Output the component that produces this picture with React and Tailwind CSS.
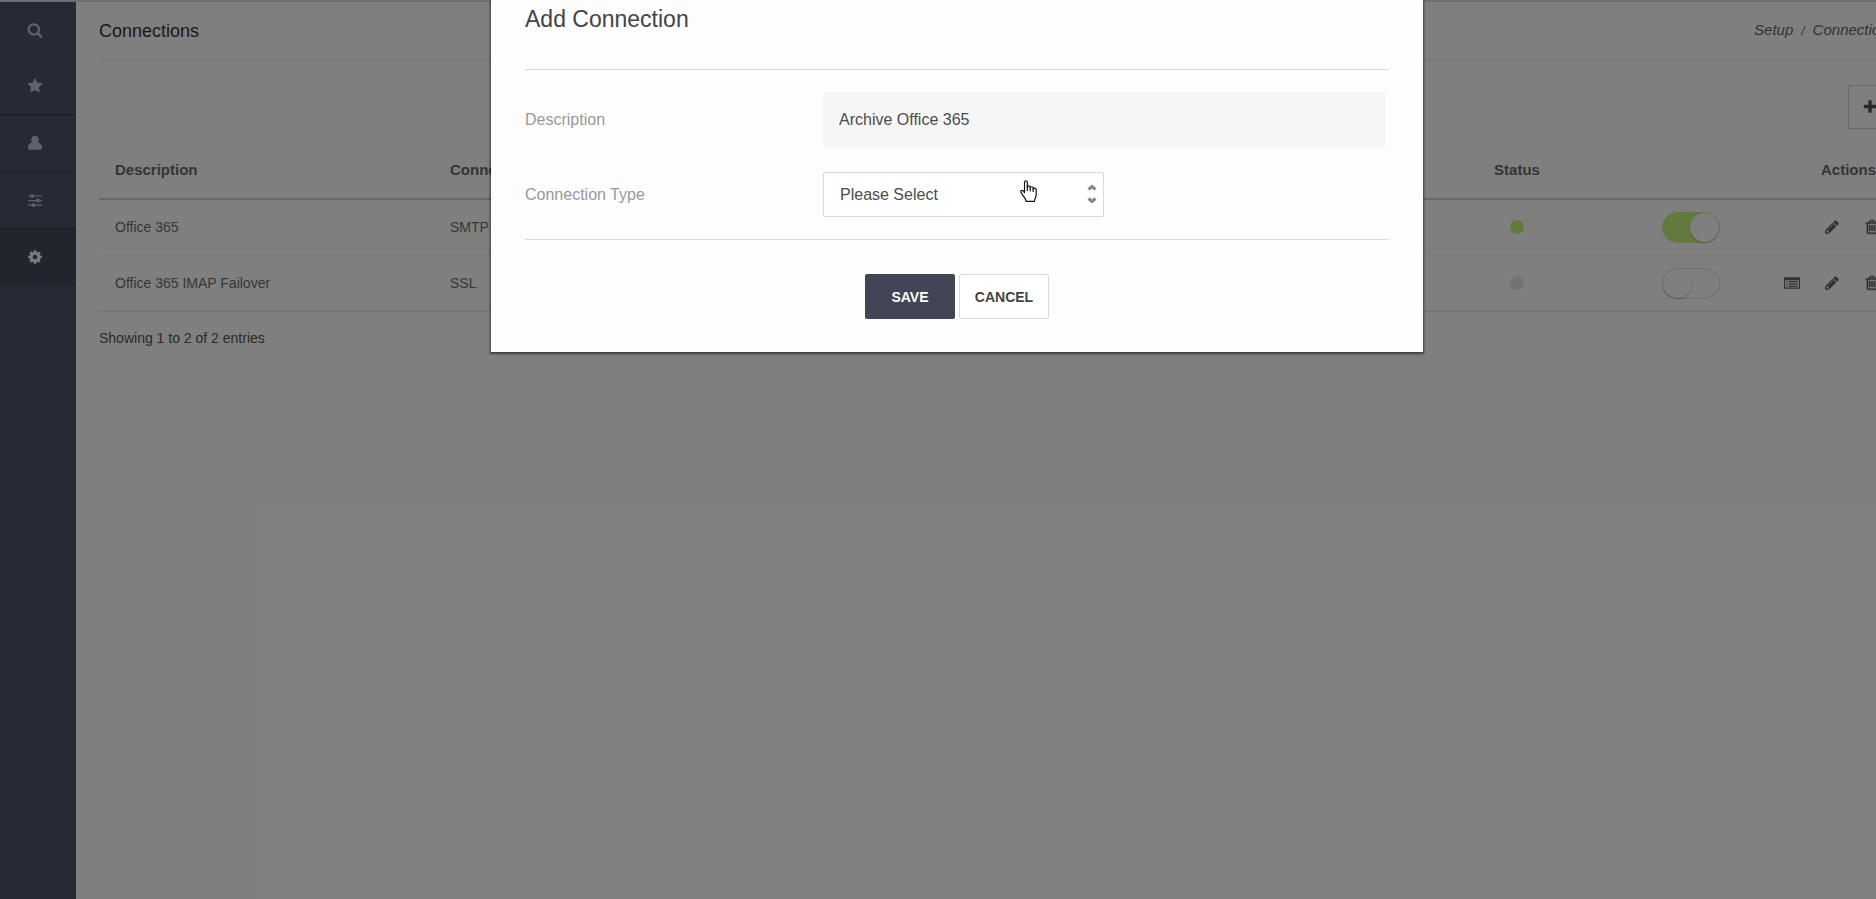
import { useState } from 'react';

const ICONS = {
  search:
    'M1216 832q0-185-131.5-316.5t-316.5-131.5-316.5 131.5-131.5 316.5 131.5 316.5 316.5 131.5 316.5-131.5 131.5-316.5zm512 832q0 52-38 90t-90 38q-54 0-90-38l-343-342q-179 124-399 124-143 0-273.5-55.5t-225-150-150-225-55.5-273.5 55.5-273.5 150-225 225-150 273.5-55.5 273.5 55.5 225 150 150 225 55.5 273.5q0 220-124 399l343 343q37 37 37 90z',
  star:
    'M1728 647q0 22-26 48l-363 354 86 500q1 7 1 20 0 21-10.5 35.5t-30.5 14.5q-19 0-40-12l-449-236-449 236q-22 12-40 12-21 0-31.5-14.5t-10.5-35.5q0-6 2-20l86-500-364-354q-25-27-25-48 0-37 56-46l502-73 225-455q19-41 49-41t49 41l225 455 502 73q56 9 56 46z',
  user:
    'M896 96A440 440 0 0 1 1220 830C1500 850 1680 1060 1680 1400C1680 1560 1580 1664 1420 1664H372C212 1664 112 1560 112 1400C112 1060 292 850 572 830A440 440 0 0 1 896 96Z',
  sliders:
    'M480 1408v128h-352v-128h352zm352-128q26 0 45 19t19 45v256q0 26-19 45t-45 19h-256q-26 0-45-19t-19-45v-256q0-26 19-45t45-19h256zm160-384v128h-864v-128h864zm-640-512v128h-224v-128h224zm1312 1024v128h-736v-128h736zm-960-1152q26 0 45 19t19 45v256q0 26-19 45t-45 19h-256q-26 0-45-19t-19-45v-256q0-26 19-45t45-19h256zm640 512q26 0 45 19t19 45v256q0 26-19 45t-45 19h-256q-26 0-45-19t-19-45v-256q0-26 19-45t45-19h256zm320 128v128h-224v-128h224zm0-512v128h-864v-128h864z',
  cog:
    'M1152 896q0-106-75-181t-181-75-181 75-75 181 75 181 181 75 181-75 75-181zm512-109v222q0 12-8 23t-20 13l-185 28q-19 54-39 91 35 50 107 138 10 12 10 25t-9 23q-27 37-99 108t-94 71q-12 0-26-9l-138-108q-44 23-91 38-16 136-29 186-7 28-36 28h-222q-14 0-24.5-8.5t-11.5-21.5l-28-184q-49-16-90-37l-141 107q-10 9-25 9-14 0-25-11-126-114-165-168-7-10-7-23 0-12 8-23 15-21 51-66.5t54-70.5q-27-50-41-99l-183-27q-13-2-21-12.5t-8-23.5v-222q0-12 8-23t19-13l186-28q14-46 39-92-40-57-107-138-10-12-10-24 0-10 9-23 26-36 98.5-107.5t94.5-71.5q13 0 26 10l138 107q44-23 91-38 16-136 29-186 7-28 36-28h222q14 0 24.5 8.5t11.5 21.5l28 184q49 16 90 37l142-107q9-9 24-9 13 0 25 10 129 119 165 170 7 8 7 22 0 12-8 23-15 21-51 66.5t-54 70.5q26 50 41 98l183 28q13 2 21 12.5t8 23.5z',
  pencil:
    'M491 1536l91-91-235-235-91 91v107h128v128h107zm523-928q0-22-22-22-10 0-17 7l-542 542q-7 7-7 17 0 22 22 22 10 0 17-7l542-542q7-7 7-17zm-54-192l416 416-832 832h-416v-416zm683 96q0 53-37 90l-166 166-416-416 166-165q36-38 90-38 53 0 91 38l235 234q37 39 37 91z',
  trash:
    'M704 736v576q0 14-9 23t-23 9h-64q-14 0-23-9t-9-23v-576q0-14 9-23t23-9h64q14 0 23 9t9 23zm256 0v576q0 14-9 23t-23 9h-64q-14 0-23-9t-9-23v-576q0-14 9-23t23-9h64q14 0 23 9t9 23zm256 0v576q0 14-9 23t-23 9h-64q-14 0-23-9t-9-23v-576q0-14 9-23t23-9h64q14 0 23 9t9 23zm128 724v-948h-896v948q0 22 7 40.5t14.5 27 10.5 8.5h832q3 0 10.5-8.5t14.5-27 7-40.5zm-672-1076h448l-48-117q-7-9-17-11h-317q-10 2-17 11zm928 32v64q0 14-9 23t-23 9h-96v948q0 83-47 143.5t-113 60.5h-832q-66 0-113-58.5t-47-141.5v-952h-96q-14 0-23-9t-9-23v-64q0-14 9-23t23-9h309l70-167q15-37 54-63t79-26h320q40 0 79 26t54 63l70 167h309q14 0 23 9t9 23z',
  list:
    'M0 352q0-96 96-96h1600q96 0 96 96v1088q0 96-96 96h-1600q-96 0-96-96zM128 576v832h1536v-832zM256 672h128v128h-128zM512 672h1024v128h-1024zM256 928h128v128h-128zM512 928h1024v128h-1024zM256 1184h128v128h-128zM512 1184h1024v128h-1024z',
  plus:
    'M1600 736v192q0 40-28 68t-68 28h-416v416q0 40-28 68t-68 28h-192q-40 0-68-28t-28-68v-416h-416q-40 0-68-28t-28-68v-192q0-40 28-68t68-28h416v-416q0-40 28-68t68-28h192q40 0 68 28t28 68v416h416q40 0 68 28t28 68z',
};

const NAV = [
  { icon: 'search', label: 'Search' },
  { icon: 'star', label: 'Favourites' },
  { icon: 'user', label: 'Users' },
  { icon: 'sliders', label: 'Policies' },
  { icon: 'cog', label: 'Setup', active: true },
];

const CONNECTIONS = [
  { id: 1, description: 'Office 365', type: 'SMTP', enabled: true },
  { id: 2, description: 'Office 365 IMAP Failover', type: 'SSL', enabled: false },
];

function Icon({ name, className }) {
  return (
    <svg viewBox="0 0 1792 1792" fill="currentColor" className={className} aria-hidden="true">
      <path d={ICONS[name]} fillRule={name === 'list' ? 'evenodd' : 'nonzero'} />
    </svg>
  );
}

function Sidebar() {
  return (
    <nav className="w-[76px] shrink-0 bg-[#4c5568]">
      {NAV.map((item, i) => (
        <a
          key={item.icon}
          href="#"
          aria-label={item.label}
          className={`flex items-center justify-center border-b pr-[6px] ${i === 0 ? 'h-14' : 'h-[57px]'} ${
            i === 0 || i === NAV.length - 1 ? 'border-transparent' : 'border-[#363b48]'
          } ${item.active ? 'bg-[#434a5b] text-[#f2f4f8]' : 'text-[#bfc4d2]'}`}
        >
          <Icon name={item.icon} className="size-4" />
        </a>
      ))}
    </nav>
  );
}

function ConnectionRow({ connection }) {
  const [enabled, setEnabled] = useState(connection.enabled);

  return (
    <tr className="h-14 border-b border-[#f2f2f2] last:border-[#e4e4e4]">
      <td className="px-4">{connection.description}</td>
      <td className="px-4">{connection.type}</td>
      <td>
        <span className={`mx-auto block size-[14px] rounded-full ${enabled ? 'bg-[#c4f57a]' : 'bg-[#e6e6e6]'}`} />
      </td>
      <td>
        <input
          type="checkbox"
          aria-label={`Enable ${connection.description}`}
          checked={enabled}
          onChange={(e) => setEnabled(e.target.checked)}
          className="mx-auto block h-[31px] w-[58px] appearance-none rounded-full border border-[#dedede] bg-white before:block before:size-[29px] before:rounded-full before:bg-white before:shadow-[0_1px_2px_rgba(0,0,0,0.25)] checked:border-[#c4f57a] checked:bg-[#c4f57a] checked:before:translate-x-[27px]"
        />
      </td>
      <td className="pr-4">
        <div className="flex justify-end gap-6 text-[#606060]">
          {!connection.enabled && (
            <button type="button" aria-label="View log">
              <Icon name="list" className="size-4" />
            </button>
          )}
          <button type="button" aria-label="Edit">
            <Icon name="pencil" className="size-4" />
          </button>
          <button type="button" aria-label="Delete">
            <Icon name="trash" className="size-4 stroke-current stroke-[60]" />
          </button>
        </div>
      </td>
    </tr>
  );
}

function ConnectionsPage() {
  return (
    <main className="min-w-0 flex-1 pr-[18px] pl-[23px]">
      <header className="flex h-[58px] items-center justify-between border-b border-[#ededed]">
        <h1 className="text-lg text-[#333]">Connections</h1>
        <div className="flex items-center gap-2 text-[15px] text-[#666] italic">
          <a href="#">Setup</a>
          <span className="text-xs">/</span>
          <a href="#">Connections</a>
        </div>
      </header>

      <div className="flex justify-end pt-[25px]">
        <button
          type="button"
          aria-label="Add connection"
          className="flex h-11 w-12 items-center justify-center border border-[#d4d4d4] pr-1 text-[#555]"
        >
          <Icon name="plus" className="size-4" />
        </button>
      </div>

      <table className="mt-3 w-full table-fixed text-left text-sm text-[#6e6e6e]">
        <thead>
          <tr className="h-[58px] border-b-2 border-[#d0d0d0] text-[15px] text-[#6a6a6a]">
            <th className="w-[335px] px-4">Description</th>
            <th className="px-4">Connection</th>
            <th className="w-[174px] text-center">Status</th>
            <th className="w-[174px]" />
            <th className="w-[118px] pr-5 text-right">Actions</th>
          </tr>
        </thead>
        <tbody>
          {CONNECTIONS.map((connection) => (
            <ConnectionRow key={connection.id} connection={connection} />
          ))}
        </tbody>
      </table>
      <p className="mt-4 text-sm text-[#555]">Showing 1 to 2 of 2 entries</p>
    </main>
  );
}

function HandPointer() {
  return (
    <svg
      viewBox="0 0 17 22"
      className="pointer-events-none absolute top-2 left-[197px] h-[22px] w-[17px]"
      fill="#fff"
      stroke="#111"
      strokeWidth="1.2"
      strokeLinejoin="round"
      strokeLinecap="round"
    >
      <path d="M4.5 12.5V2.3C4.5 .2 7.3 .2 7.3 2.3V7.5C7.4 5.2 10.2 5.4 10.2 7.2V8C10.5 6.2 13.2 6.4 13.2 8.2V9C13.6 7.6 16.2 7.8 16.2 9.8V14.5C16.2 17.5 14.6 18.5 14.4 21.3H6.2C5.8 18.6 3.5 16.6 1.2 12.6C0 10.5 2.2 9.7 3.2 11Z" />
      <path d="M7.3 7V10.5M10.2 7.8V11M13.2 8.8V11.5" fill="none" />
    </svg>
  );
}

function AddConnectionModal() {
  const [description, setDescription] = useState('Archive Office 365');

  return (
    <div className="absolute inset-0 bg-black/50">
      <form
        onSubmit={(e) => e.preventDefault()}
        role="dialog"
        aria-labelledby="modal-title"
        className="mx-auto max-w-[932px] bg-[#fdfdfd] px-[34px] pb-[33px] shadow-[0_1px_2px_1px_rgba(0,0,0,0.5)]"
      >
        <h2 id="modal-title" className="h-[70px] border-b border-[#dcdcdc] pt-1 text-[23px] leading-[30px] text-[#444]">
          Add Connection
        </h2>

        <div className="border-b border-[#dcdcdc] pt-[22px] pb-[22px] text-base">
          <div className="flex items-center">
            <label htmlFor="description" className="w-[298px] text-[#999]">
              Description
            </label>
            <input
              id="description"
              value={description}
              onChange={(e) => setDescription(e.target.value)}
              className="mr-[3px] h-[55px] min-w-0 flex-1 bg-[#f6f6f7] px-4 text-[#4c4c4c] outline-none"
            />
          </div>
          <div className="mt-[25px] flex items-center">
            <label htmlFor="connection-type" className="w-[298px] text-[#999]">
              Connection Type
            </label>
            <div className="relative w-[281px]">
              <select
                id="connection-type"
                className="block h-[45px] w-full appearance-none rounded-xs border border-[#d9d9d9] bg-white px-4 text-[#4c4c4c] outline-none"
              >
                <option>Please Select</option>
              </select>
              <svg
                viewBox="0 0 10 20"
                className="pointer-events-none absolute top-3 right-[7px] h-5 w-[10px]"
                fill="none"
                stroke="#888"
                strokeWidth="3"
              >
                <path d="M1.5 5.5L5 2.5L8.5 5.5M1.5 14.5L5 17.5L8.5 14.5" />
              </svg>
              <HandPointer />
            </div>
          </div>
        </div>

        <div className="mt-[34px] flex justify-center gap-1 text-sm font-bold">
          <button type="submit" className="h-[45px] w-[90px] rounded-xs bg-[#424555] text-white">
            SAVE
          </button>
          <button type="button" className="h-[45px] w-[90px] rounded-xs border border-[#d9d9d9] bg-white text-[#444]">
            CANCEL
          </button>
        </div>
      </form>
    </div>
  );
}

export default function App() {
  return (
    <div className="overflow-hidden font-['Liberation_Sans',Arial,sans-serif]">
      <div className="relative flex min-h-screen w-[calc(100%+38px)] flex-col bg-white">
        <div className="h-[2px] bg-[#dcdcdc]" />
        <div className="flex flex-1">
          <Sidebar />
          <ConnectionsPage />
        </div>
        <AddConnectionModal />
      </div>
    </div>
  );
}
